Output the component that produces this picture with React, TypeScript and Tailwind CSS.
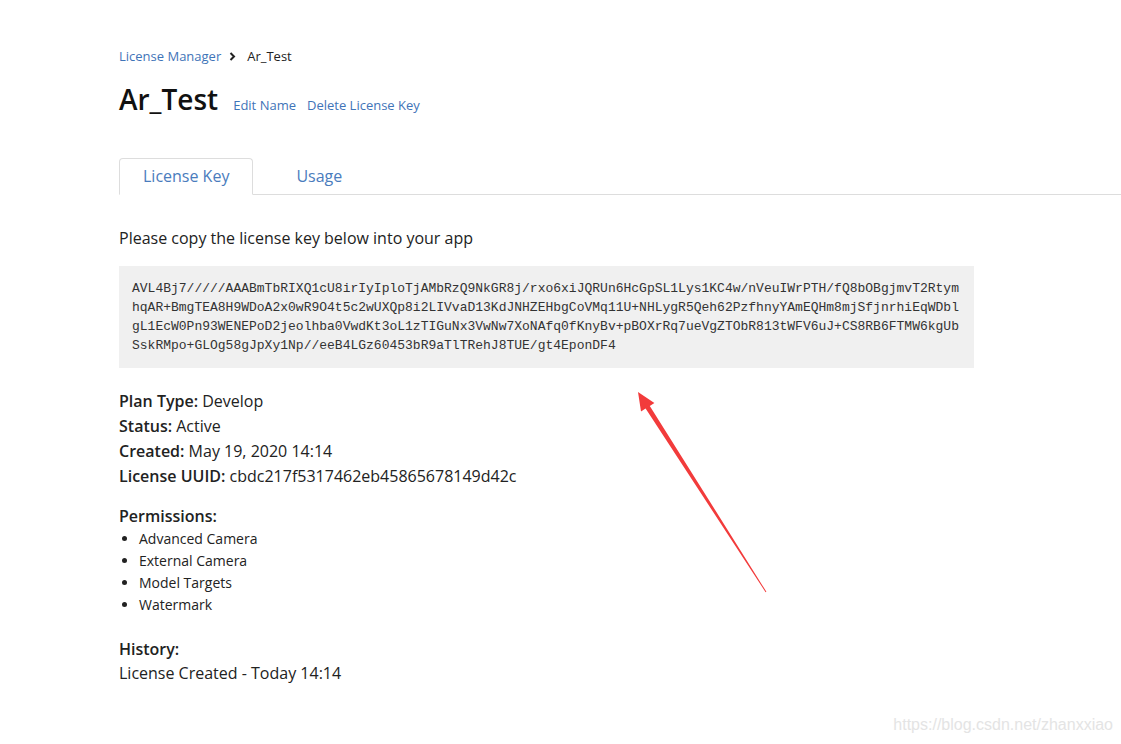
const keyLines = [
  "AVL4Bj7/////AAABmTbRIXQ1cU8irIyIploTjAMbRzQ9NkGR8j/rxo6xiJQRUn6HcGpSL1Lys1KC4w/nVeuIWrPTH/fQ8bOBgjmvT2Rtym",
  "hqAR+BmgTEA8H9WDoA2x0wR9O4t5c2wUXQp8i2LIVvaD13KdJNHZEHbgCoVMq11U+NHLygR5Qeh62PzfhnyYAmEQHm8mjSfjnrhiEqWDbl",
  "gL1EcW0Pn93WENEPoD2jeolhba0VwdKt3oL1zTIGuNx3VwNw7XoNAfq0fKnyBv+pBOXrRq7ueVgZTObR813tWFV6uJ+CS8RB6FTMW6kgUb",
  "SskRMpo+GLOg58gJpXy1Np//eeB4LGz60453bR9aTlTRehJ8TUE/gt4EponDF4",
];

const permissions = ["Advanced Camera", "External Camera", "Model Targets", "Watermark"];

function Arrow() {
  return (
    <svg
      className="pointer-events-none absolute left-0 top-0"
      width="1121"
      height="744"
      viewBox="0 0 1121 744"
    >
      <polygon
        points="638,392 654.4,402.9 649.8,405.9 766.4,591.7 765.6,592.3 645.6,408.5 641,411.5"
        fill="#f23b3b"
      />
    </svg>
  );
}

export default function App() {
  return (
    <div className="relative min-h-[744px] overflow-hidden bg-white pl-[119px] pt-[46px] font-['Open_Sans','Noto_Sans',sans-serif] text-[#222]">
      {/* breadcrumb */}
      <div className="flex items-center text-[13px] leading-[20px]">
        <span className="text-[#3f74b8]">License Manager</span>
        <svg className="ml-[8px] mr-[11px]" width="7" height="9" viewBox="0 0 7 9">
          <polyline points="1.5,1 5,4.5 1.5,8" fill="none" stroke="#222" strokeWidth="2" />
        </svg>
        <span>Ar_Test</span>
      </div>

      <div className="mt-[15px] flex items-baseline">
        <h1 className="text-[28px] font-semibold leading-[36px] text-[#111]">Ar_Test</h1>
        <a className="ml-[15px] text-[13px] text-[#3f74b8]">Edit Name</a>
        <a className="ml-[11px] text-[13px] text-[#3f74b8]">Delete License Key</a>
      </div>

      {/* tabs */}
      <div className="mt-[41px] flex border-b border-[#ddd]">
        <div className="-mb-px rounded-t-[4px] border border-[#ddd] border-b-white bg-white px-[23px] py-[5px] text-[16px] leading-[24px] text-[#4a7cbd]">
          License Key
        </div>
        <div className="ml-[20px] px-[23px] py-[6px] text-[16px] leading-[24px] text-[#4a7cbd]">
          Usage
        </div>
      </div>

      <p className="mt-[31px] text-[16px] leading-[24px]">Please copy the license key below into your app</p>

      <div className="mt-[16px] w-[855px] bg-[#f0f0f0] px-[13px] py-[13px] font-['Liberation_Mono','Courier_New',monospace] text-[13px] leading-[19px] text-[#333]">
        {keyLines.map((line) => (
          <div key={line} className="whitespace-pre">
            {line}
          </div>
        ))}
      </div>

      <div className="mt-[21px] text-[16px] leading-[25px]">
        <div>
          <span className="font-semibold">Plan Type:</span> Develop
        </div>
        <div>
          <span className="font-semibold">Status:</span> Active
        </div>
        <div>
          <span className="font-semibold">Created:</span> May 19, 2020 14:14
        </div>
        <div>
          <span className="font-semibold">License UUID:</span> cbdc217f5317462eb45865678149d42c
        </div>
      </div>

      <div className="mt-[15px] text-[16px] font-semibold leading-[25px]">Permissions:</div>
      <ul className="-mt-[1px] list-disc pl-[20px] text-[14px] leading-[22px]">
        {permissions.map((p) => (
          <li key={p}>{p}</li>
        ))}
      </ul>

      <div className="mt-[21px] text-[16px] font-semibold leading-[24px]">History:</div>
      <div className="text-[16px] leading-[24px]">License Created - Today 14:14</div>

      <Arrow />

      <div className="absolute bottom-[7px] right-[8px] font-['Liberation_Sans',Arial,sans-serif] text-[16px] text-[#e4e4e4]">
        https://blog.csdn.net/zhanxxiao
      </div>
    </div>
  );
}
